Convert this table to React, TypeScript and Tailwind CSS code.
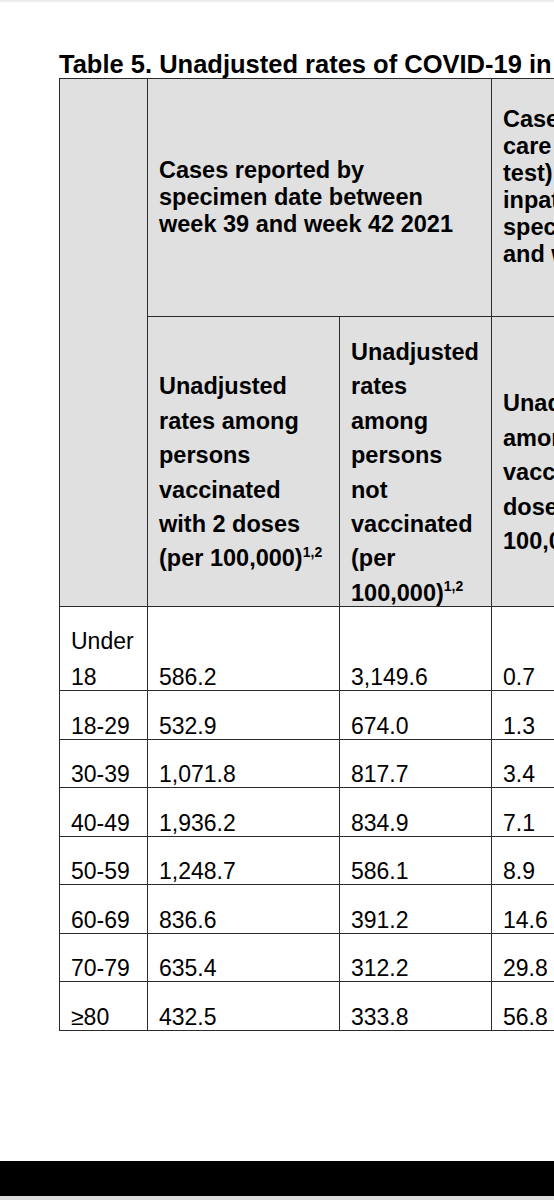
import React from 'react';

const rows = [
  ['Under 18', '586.2', '3,149.6', '0.7'],
  ['18-29', '532.9', '674.0', '1.3'],
  ['30-39', '1,071.8', '817.7', '3.4'],
  ['40-49', '1,936.2', '834.9', '7.1'],
  ['50-59', '1,248.7', '586.1', '8.9'],
  ['60-69', '836.6', '391.2', '14.6'],
  ['70-79', '635.4', '312.2', '29.8'],
  ['≥80', '432.5', '333.8', '56.8'],
];

function Sup() {
  return <sup className="text-[14px] top-[-0.7em]">1,2</sup>;
}

export default function App() {
  const font = { fontFamily: '"Liberation Sans", Arial, sans-serif' };
  const cell = 'border border-[#2b2b2b] pl-[11px] pr-0 text-left';

  return (
    <div className="w-full h-[1200px] flex flex-col overflow-hidden bg-white text-black" style={font}>
      <div className="h-[3px] bg-gradient-to-b from-[#e4e4e4] to-white" />

      <div className="pl-[59px] pt-[47px]">
        {/* Title */}
        <h1 className="text-[25.5px] leading-[28px] font-bold whitespace-nowrap">
          Table 5. Unadjusted rates of COVID-19 in persons vaccinated and not vaccinated
        </h1>

        {/* Table */}
        <table className="border-collapse table-fixed w-[732px]">
          <colgroup>
            <col className="w-[88px]" />
            <col className="w-[192px]" />
            <col className="w-[152px]" />
            <col className="w-[300px]" />
          </colgroup>
          <thead className="bg-[#e0e0e0] font-bold text-[23.5px]">
            <tr className="h-[238px]">
              <th rowSpan={2} className={cell} />
              <th colSpan={2} className={`${cell} align-middle font-bold leading-[26.7px] whitespace-nowrap`}>
                Cases reported by
                <br />
                specimen date between
                <br />
                week 39 and week 42 2021
              </th>
              <th className={`${cell} align-top pt-[27px] font-bold leading-[27px] whitespace-nowrap`}>
                Cases presenting to emergency
                <br />
                care (within 28 days of a positive
                <br />
                test) resulting in an overnight
                <br />
                inpatient admission, by
                <br />
                specimen date between week 39
                <br />
                and week 42 2021
              </th>
            </tr>
            <tr className="h-[290px]">
              <th className={`${cell} align-middle font-bold leading-[34.4px] whitespace-nowrap`}>
                <div className="translate-y-[11px]">
                  Unadjusted
                  <br />
                  rates among
                  <br />
                  persons
                  <br />
                  vaccinated
                  <br />
                  with 2 doses
                  <br />
                  (per 100,000)
                  <Sup />
                </div>
              </th>
              <th className={`${cell} align-middle font-bold leading-[34.4px] whitespace-nowrap`}>
                <div className="translate-y-[11px]">
                  Unadjusted
                  <br />
                  rates
                  <br />
                  among
                  <br />
                  persons
                  <br />
                  not
                  <br />
                  vaccinated
                  <br />
                  (per
                  <br />
                  100,000)
                  <Sup />
                </div>
              </th>
              <th className={`${cell} align-middle font-bold leading-[34.4px] whitespace-nowrap`}>
                <div className="translate-y-[11px]">
                  Unadjusted rates
                  <br />
                  among persons
                  <br />
                  vaccinated with 2
                  <br />
                  doses (per
                  <br />
                  100,000)
                  <Sup />
                </div>
              </th>
            </tr>
          </thead>
          <tbody className="text-[23px]">
            {rows.map((r, i) => (
              <tr key={r[0]} className={i === 0 ? 'h-[84px]' : 'h-[48.5px]'}>
                {r.map((v, j) => (
                  <td key={j} className={`${cell} align-bottom pb-0 pt-0`}>
                    <div className="leading-[36px] translate-y-[5px]">{v}</div>
                  </td>
                ))}
              </tr>
            ))}
          </tbody>
        </table>
      </div>

      <div className="mt-auto h-[35px] bg-black" />
      <div className="h-[4px] bg-[#dcdcdc]" />
    </div>
  );
}
